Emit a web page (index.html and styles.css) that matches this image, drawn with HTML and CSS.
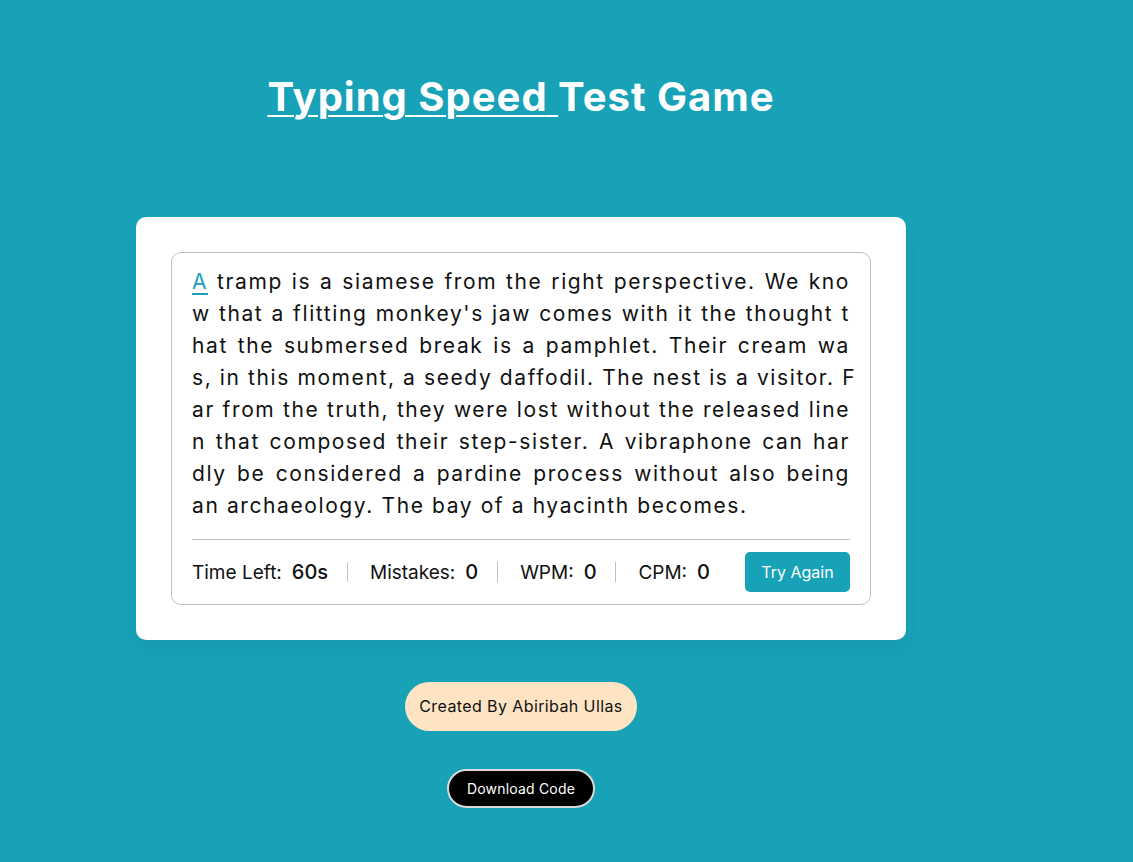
FILE: index.html
```html
<!DOCTYPE html>
<html lang="en">
<head>
<meta charset="utf-8">
<title>Typing Speed Test Game</title>
<link rel="stylesheet" href="styles.css">
</head>
<body>
<div class="page">
  <h1 class="title"><span class="title-underline">Typing Speed </span>Test Game</h1>
  <div class="wrapper">
    <div class="content-box">
      <div class="typing-text">
        <p>
          <span class="line"><span class="active">A</span> tramp is a siamese from the right perspective. We kno</span>
          <span class="line">w that a flitting monkey's jaw comes with it the thought t</span>
          <span class="line">hat the submersed break is a pamphlet. Their cream wa</span>
          <span class="line">s, in this moment, a seedy daffodil. The nest is a visitor. F</span>
          <span class="line">ar from the truth, they were lost without the released line</span>
          <span class="line">n that composed their step-sister. A vibraphone can har</span>
          <span class="line">dly be considered a pardine process without also being</span>
          <span class="line last">an archaeology. The bay of a hyacinth becomes.</span>
        </p>
      </div>
      <div class="content">
        <ul class="result-details">
          <li class="time"><p>Time Left:</p><span><b>60</b>s</span></li>
          <li class="mistake"><p>Mistakes:</p><span>0</span></li>
          <li class="wpm"><p>WPM:</p><span>0</span></li>
          <li class="cpm"><p>CPM:</p><span>0</span></li>
        </ul>
        <button class="try-btn">Try Again</button>
      </div>
    </div>
  </div>
  <div class="credit">Created By Abiribah Ullas</div>
  <button class="download-btn">Download Code</button>
</div>
</body>
</html>
```

FILE: styles.css
```css
* {
  box-sizing: border-box;
}

body {
  margin: 0;
  background: #17a2b8;
  font-family: "Inter", "Lato", "DejaVu Sans", sans-serif;
  min-height: 862px;
}

.page {
  width: 1042px;
  display: flex;
  flex-direction: column;
  align-items: center;
  padding-top: 67px;
}

.title {
  margin: 0;
  font-size: 40px;
  line-height: 60px;
  font-weight: 700;
  color: #fff;
  letter-spacing: 1px;
}

.title-underline {
  text-decoration: underline;
  text-decoration-thickness: 2px;
  text-underline-offset: 4px;
  white-space: pre;
}

.wrapper {
  margin-top: 90px;
  width: 770px;
  padding: 35px;
  background: #fff;
  border-radius: 10px;
  box-shadow: 0 10px 15px rgba(0, 0, 0, 0.05);
}

.content-box {
  padding: 13px 20px 0;
  border-radius: 10px;
  border: 1px solid #bfbfbf;
}

.typing-text p {
  margin: 0;
  font-size: 21px;
  line-height: 32px;
  letter-spacing: 1.6px;
  color: #111;
}

.typing-text .line {
  display: block;
  white-space: nowrap;
  text-align: justify;
  text-align-last: justify;
}

.typing-text .line.last {
  text-align-last: left;
}

.typing-text .active {
  color: #17a2b8;
  text-decoration: underline;
  text-decoration-thickness: 2px;
  text-underline-offset: 4px;
}

.content {
  margin-top: 17px;
  display: flex;
  align-items: center;
  justify-content: space-between;
  padding: 12px 0;
  border-top: 1px solid #bfbfbf;
}

.result-details {
  margin: 0;
  padding: 0;
  display: flex;
  align-items: center;
  justify-content: space-between;
  width: calc(100% - 140px);
}

.result-details li {
  display: flex;
  align-items: center;
  height: 20px;
  list-style: none;
}

.result-details li:not(:first-child) {
  padding-left: 22px;
  border-left: 1px solid #bfbfbf;
}

.result-details li p {
  margin: 0;
  font-size: 19px;
  color: #111;
}

.result-details li span {
  display: block;
  margin-left: 10px;
  font-size: 20px;
  font-weight: 500;
  color: #111;
}

.result-details li span b {
  font-weight: 500;
}

.try-btn {
  width: 105px;
  padding: 8px 0;
  border: none;
  border-radius: 5px;
  background: #17a2b8;
  color: #fff;
  font-family: inherit;
  font-size: 16px;
  line-height: 24px;
}

.credit {
  margin-top: 42px;
  padding: 12px 14px;
  border-radius: 25px;
  background: #ffe4c4;
  color: #111;
  font-size: 16px;
  line-height: 25px;
  letter-spacing: 0.4px;
}

.download-btn {
  margin-top: 38px;
  padding: 0 18px;
  height: 39px;
  border: 2px solid #d9d9d9;
  border-radius: 20px;
  background: #000;
  color: #fff;
  font-family: inherit;
  font-size: 14px;
  letter-spacing: 0.2px;
}
```
